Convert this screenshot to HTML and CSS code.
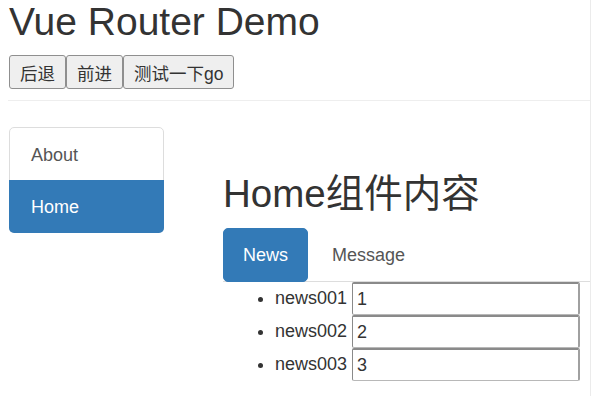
FILE: index.html
```html
<!DOCTYPE html>
<html lang="zh">
<head>
<meta charset="utf-8">
<title>Vue Router Demo</title>
<link rel="stylesheet" href="styles.css">
</head>
<body>
<div class="page">
  <header class="top">
    <h1 class="title">Vue Router Demo</h1>
    <div class="btns">
      <button class="btn">后退</button>
      <button class="btn">前进</button>
      <button class="btn">测试一下go</button>
    </div>
  </header>
  <hr class="rule">
  <div class="main">
    <nav class="side">
      <a class="side-item first">About</a>
      <a class="side-item last active">Home</a>
    </nav>
    <section class="content">
      <h2 class="heading">Home组件内容</h2>
      <ul class="tabs">
        <li class="tab-li"><a class="tab active">News</a></li>
        <li class="tab-li"><a class="tab">Message</a></li>
      </ul>
      <ul class="news">
        <li class="news-item">news001 <input class="field" value="1"></li>
        <li class="news-item">news002 <input class="field" value="2"></li>
        <li class="news-item">news003 <input class="field" value="3"></li>
      </ul>
    </section>
  </div>
</div>
</body>
</html>
```
FILE: styles.css
```css
* { box-sizing: border-box; }
html, body { margin: 0; padding: 0; background: #fff; }
body {
  font-family: "Liberation Sans", "Noto Sans CJK SC", sans-serif;
  font-size: 18px;
  color: #333;
}
.page {
  width: 591px;
  min-height: 396px;
  border-right: 1px solid #ebebeb;
  padding-top: 1px;
  overflow: hidden;
}
.top { padding-left: 9px; }
.title {
  margin: 0;
  font-size: 39px;
  font-weight: 400;
  line-height: 41px;
  height: 41px;
  color: #333;
}
.btns {
  display: flex;
  gap: 0;
  margin-top: 13px;
}
.btn {
  height: 34px;
  padding: 0 10px;
  font-family: "Liberation Sans", "Noto Sans CJK SC", sans-serif;
  font-size: 17.5px;
  color: #333;
  background: #efefef;
  border: 1px solid #8f8f8f;
  border-radius: 3px;
}
.rule {
  margin: 11px 0 0 8px;
  border: 0;
  border-top: 1px solid #eee;
  height: 0;
}
.main {
  display: flex;
  margin-top: 26px;
}
.side {
  width: 155px;
  margin-left: 9px;
  border: 1px solid #ddd;
  border-radius: 5px;
  align-self: flex-start;
}
.side-item {
  display: block;
  height: 52px;
  padding: 2px 21px 0;
  line-height: 50px;
  color: #555;
  text-decoration: none;
}
.side-item.first { border-radius: 5px 5px 0 0; }
.side-item.last {
  margin: 0 -1px -1px -1px;
  height: 53px;
  padding-left: 22px;
  border-radius: 0 0 5px 5px;
}
.side-item.active { background: #337ab7; color: #fff; }
.content {
  flex: 1;
  margin-left: 59px;
}
.heading {
  margin: 46px 0 0;
  font-size: 38.5px;
  font-weight: 400;
  line-height: 41px;
  color: #333;
}
.tabs {
  list-style: none;
  margin: 14px 0 0;
  padding: 0;
  display: flex;
  border-bottom: 1px solid #ddd;
}
.tab-li { margin-bottom: -1px; margin-right: 4px; }
.tab {
  display: block;
  height: 54px;
  padding: 0 19px;
  line-height: 52px;
  border: 1px solid transparent;
  border-radius: 5px;
  color: #555;
  text-decoration: none;
}
.tab.active { background: #337ab7; border-color: #337ab7; color: #fff; }
.news {
  margin: 0;
  padding-left: 52px;
}
.news-item {
  line-height: 33px;
  height: 33px;
}
.field {
  width: 228px;
  height: 33px;
  vertical-align: top;
  padding: 0 4px;
  font-family: "Liberation Sans", sans-serif;
  font-size: 18px;
  color: #333;
  border-style: solid;
  border-width: 2px 2px 1px 1px;
  border-color: #8a8a8a #a0a0a0 #b8b8b8 #8a8a8a;
  border-radius: 2px;
  background: #fff;
}
```
